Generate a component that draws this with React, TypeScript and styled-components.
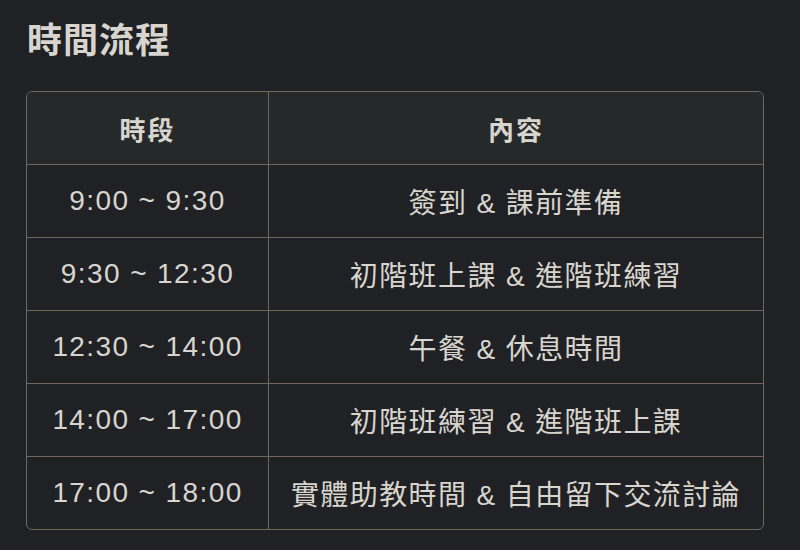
import styled, { createGlobalStyle } from "styled-components";

const GlobalStyle = createGlobalStyle`
  html, body {
    margin: 0;
    padding: 0;
    background: #202124;
  }
  body {
    font-family: "Liberation Sans", "Noto Sans CJK TC", sans-serif;
    color: #d8d5ce;
  }
`;

const Page = styled.div`
  width: 800px;
  height: 550px;
  box-sizing: border-box;
  padding: 18px 36px 0 26px;
  overflow: hidden;
`;

const Title = styled.h2`
  margin: 0 0 27px 1px;
  font-size: 35px;
  font-weight: 700;
  line-height: 46px;
  letter-spacing: 1px;
  color: #d8d5ce;
`;

const Table = styled.table`
  width: 738px;
  border-collapse: separate;
  border-spacing: 0;
  border: 1px solid #6f675c;
  border-radius: 6px;
  overflow: hidden;
`;

const HeadCell = styled.th<{ $width?: number }>`
  width: ${(p) => (p.$width ? `${p.$width}px` : "auto")};
  height: 72px;
  padding: 0;
  background: #26292a;
  font-size: 26px;
  font-weight: 700;
  letter-spacing: 2px;
  text-align: center;
  border-bottom: 1px solid #6f675c;
  & + & {
    border-left: 1px solid #6f675c;
  }
`;

const Cell = styled.td<{ $last?: boolean }>`
  height: 72px;
  padding: 0;
  font-size: 28px;
  letter-spacing: 1.4px;
  text-align: center;
  white-space: nowrap;
  border-bottom: ${(p) => (p.$last ? "none" : "1px solid #6f675c")};
  & + & {
    border-left: 1px solid #6f675c;
  }
`;

const rows = [
  ["9:00 ~ 9:30", "簽到 & 課前準備"],
  ["9:30 ~ 12:30", "初階班上課 & 進階班練習"],
  ["12:30 ~ 14:00", "午餐 & 休息時間"],
  ["14:00 ~ 17:00", "初階班練習 & 進階班上課"],
  ["17:00 ~ 18:00", "實體助教時間 & 自由留下交流討論"],
];

export default function App() {
  return (
    <>
      <GlobalStyle />
      <Page>
        <Title>時間流程</Title>
        <Table>
          <thead>
            <tr>
              <HeadCell $width={241}>時段</HeadCell>
              <HeadCell>內容</HeadCell>
            </tr>
          </thead>
          <tbody>
            {rows.map(([time, content], i) => (
              <tr key={time}>
                <Cell $last={i === rows.length - 1}>{time}</Cell>
                <Cell $last={i === rows.length - 1}>{content}</Cell>
              </tr>
            ))}
          </tbody>
        </Table>
      </Page>
    </>
  );
}
